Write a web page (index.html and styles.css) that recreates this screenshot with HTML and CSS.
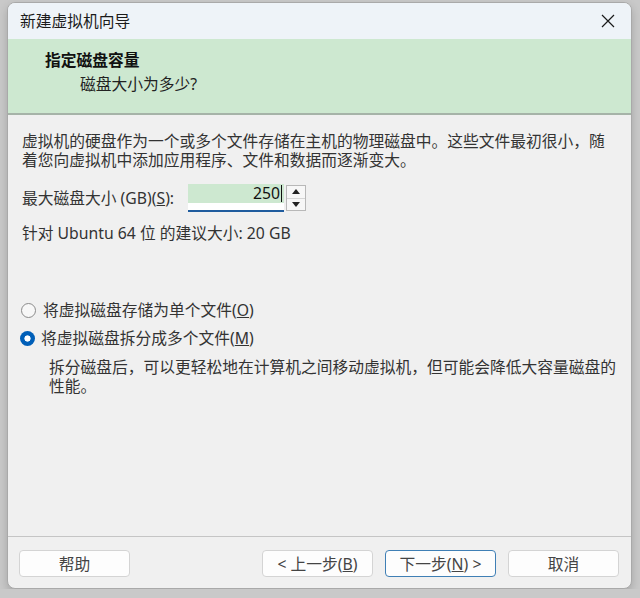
FILE: index.html
```html
<!DOCTYPE html>
<html lang="zh-CN">

<head>
  <meta charset="UTF-8">
  <meta name="viewport" content="width=device-width, initial-scale=1.0">
  <title>新建虚拟机向导</title>
  <link rel="stylesheet" href="styles.css">
</head>

<body>

  <div class="window">
    <div class="titlebar">
      <span class="title">新建虚拟机向导</span>
      <svg class="close" width="14" height="14" viewBox="0 0 14 14">
        <path d="M1 1 L13 13 M13 1 L1 13" stroke="#1a1a1a" stroke-width="1.2" fill="none" />
      </svg>
    </div>

    <div class="banner">
      <div class="banner-title">指定磁盘容量</div>
      <div class="banner-sub">磁盘大小为多少?</div>
    </div>

    <div class="content">
      <p class="intro">虚拟机的硬盘作为一个或多个文件存储在主机的物理磁盘中。这些文件最初很小，随着您向虚拟机中添加应用程序、文件和数据而逐渐变大。</p>

      <div class="size-row">
        <label>最大磁盘大小 (GB)(<u>S</u>):</label>
        <div class="spin">
          <div class="spin-input">
            <div class="spin-value">250<span class="caret"></span></div>
          </div>
          <div class="spin-buttons">
            <div class="spin-btn">
              <svg width="8" height="5" viewBox="0 0 8 5"><path d="M0 5 L4 0 L8 5 Z" fill="#222" /></svg>
            </div>
            <div class="spin-btn">
              <svg width="8" height="5" viewBox="0 0 8 5"><path d="M0 0 L4 5 L8 0 Z" fill="#222" /></svg>
            </div>
          </div>
        </div>
      </div>

      <p class="hint">针对 Ubuntu 64 位 的建议大小: 20 GB</p>

      <div class="options">
        <div class="radio-row">
          <span class="radio"></span>
          <span>将虚拟磁盘存储为单个文件(<u>O</u>)</span>
        </div>
        <div class="radio-row">
          <span class="radio checked"></span>
          <span>将虚拟磁盘拆分成多个文件(<u>M</u>)</span>
        </div>
        <p class="option-note">拆分磁盘后，可以更轻松地在计算机之间移动虚拟机，但可能会降低大容量磁盘的性能。</p>
      </div>
    </div>

    <div class="footer">
      <button class="btn">帮助</button>
      <div class="nav-buttons">
        <button class="btn">&lt; 上一步(<u>B</u>)</button>
        <button class="btn default">下一步(<u>N</u>) &gt;</button>
        <button class="btn">取消</button>
      </div>
    </div>
  </div>

</body>

</html>
```

FILE: styles.css
```css
body {
  margin: 0;
  background-color: #c9c9c9;
  font-family: "Noto Sans", "Noto Sans CJK SC", sans-serif;
  font-size: 15.75px;
  line-height: 19px;
  color: #333;
}

.window {
  margin: 2px 0 0 7px;
  width: 625px;
  height: 587px;
  box-sizing: border-box;
  border: 1px solid #a9a9a9;
  border-radius: 8px;
  background-color: #f0f0f0;
  overflow: hidden;
  display: flex;
  flex-direction: column;
  box-shadow: 0 4px 10px rgba(0, 0, 0, 0.18);
}

.titlebar {
  height: 36px;
  background-color: #eef3f8;
  display: flex;
  align-items: center;
  justify-content: space-between;
  padding: 0 14px 0 12px;
  flex-shrink: 0;
}

.title {
  color: #1a1a1a;
}

.close {
  margin-right: 2px;
}

.banner {
  height: 76px;
  background-color: #cde8d0;
  border-bottom: 2px solid #a6b3a8;
  padding: 12px 0 0 37px;
  box-sizing: border-box;
  flex-shrink: 0;
}

.banner-title {
  font-weight: bold;
  color: #111;
}

.banner-sub {
  margin: 5px 0 0 35px;
  color: #222;
}

.content {
  flex: 1;
  padding: 17px 14px 0 14px;
}

.content p {
  margin: 0;
}

.size-row {
  display: flex;
  align-items: center;
  margin-top: 14px;
  height: 28px;
}

.size-row label {
  margin-right: 14px;
}

.spin {
  display: flex;
  align-items: center;
}

.spin-input {
  width: 96px;
  height: 28px;
  box-sizing: border-box;
  background-color: #fff;
  border-bottom: 2px solid #1f5c9e;
}

.spin-value {
  height: 19px;
  background-color: #cde8d0;
  text-align: right;
  color: #111;
  padding-right: 2px;
}

.caret {
  display: inline-block;
  width: 1px;
  height: 17px;
  background-color: #111;
  vertical-align: -3px;
  margin-left: 1px;
}

.spin-buttons {
  margin-left: 2px;
  width: 20px;
  height: 26px;
  border: 1px solid #b8b8b8;
  box-sizing: border-box;
  display: flex;
  flex-direction: column;
  background-color: #f7f7f7;
}

.spin-btn {
  flex: 1;
  display: flex;
  align-items: center;
  justify-content: center;
}

.spin-btn + .spin-btn {
  border-top: 1px solid #d6d6d6;
}

.hint {
  margin-top: 12px !important;
}

.options {
  margin-top: 58px;
}

.radio-row {
  display: flex;
  align-items: center;
  margin-bottom: 9px;
}

.radio {
  width: 13px;
  height: 13px;
  border: 1px solid #8a8a8a;
  border-radius: 50%;
  background-color: #f7f7f7;
  margin: 0 7px 0 -1px;
  flex-shrink: 0;
}

.radio.checked {
  width: 15px;
  height: 15px;
  border: none;
  background: radial-gradient(circle, #fff 0, #fff 2.8px, #005fb8 3.4px);
  margin-left: -2px;
  margin-right: 6px;
}

.option-note {
  margin: 10px 0 0 27px !important;
}

.footer {
  height: 52px;
  border-top: 1px solid #c5c5c5;
  display: flex;
  justify-content: space-between;
  align-items: flex-start;
  padding: 13px 12px 0 11px;
  box-sizing: border-box;
  flex-shrink: 0;
}

.nav-buttons {
  display: flex;
  gap: 12px;
}

.btn {
  width: 111px;
  height: 27px;
  background-color: #fdfdfd;
  border: 1px solid #d4d4d4;
  border-radius: 4px;
  font-family: inherit;
  font-size: 15.75px;
  color: #444;
  padding: 0;
}

.btn.default {
  border-color: #3f7fb5;
}
```
